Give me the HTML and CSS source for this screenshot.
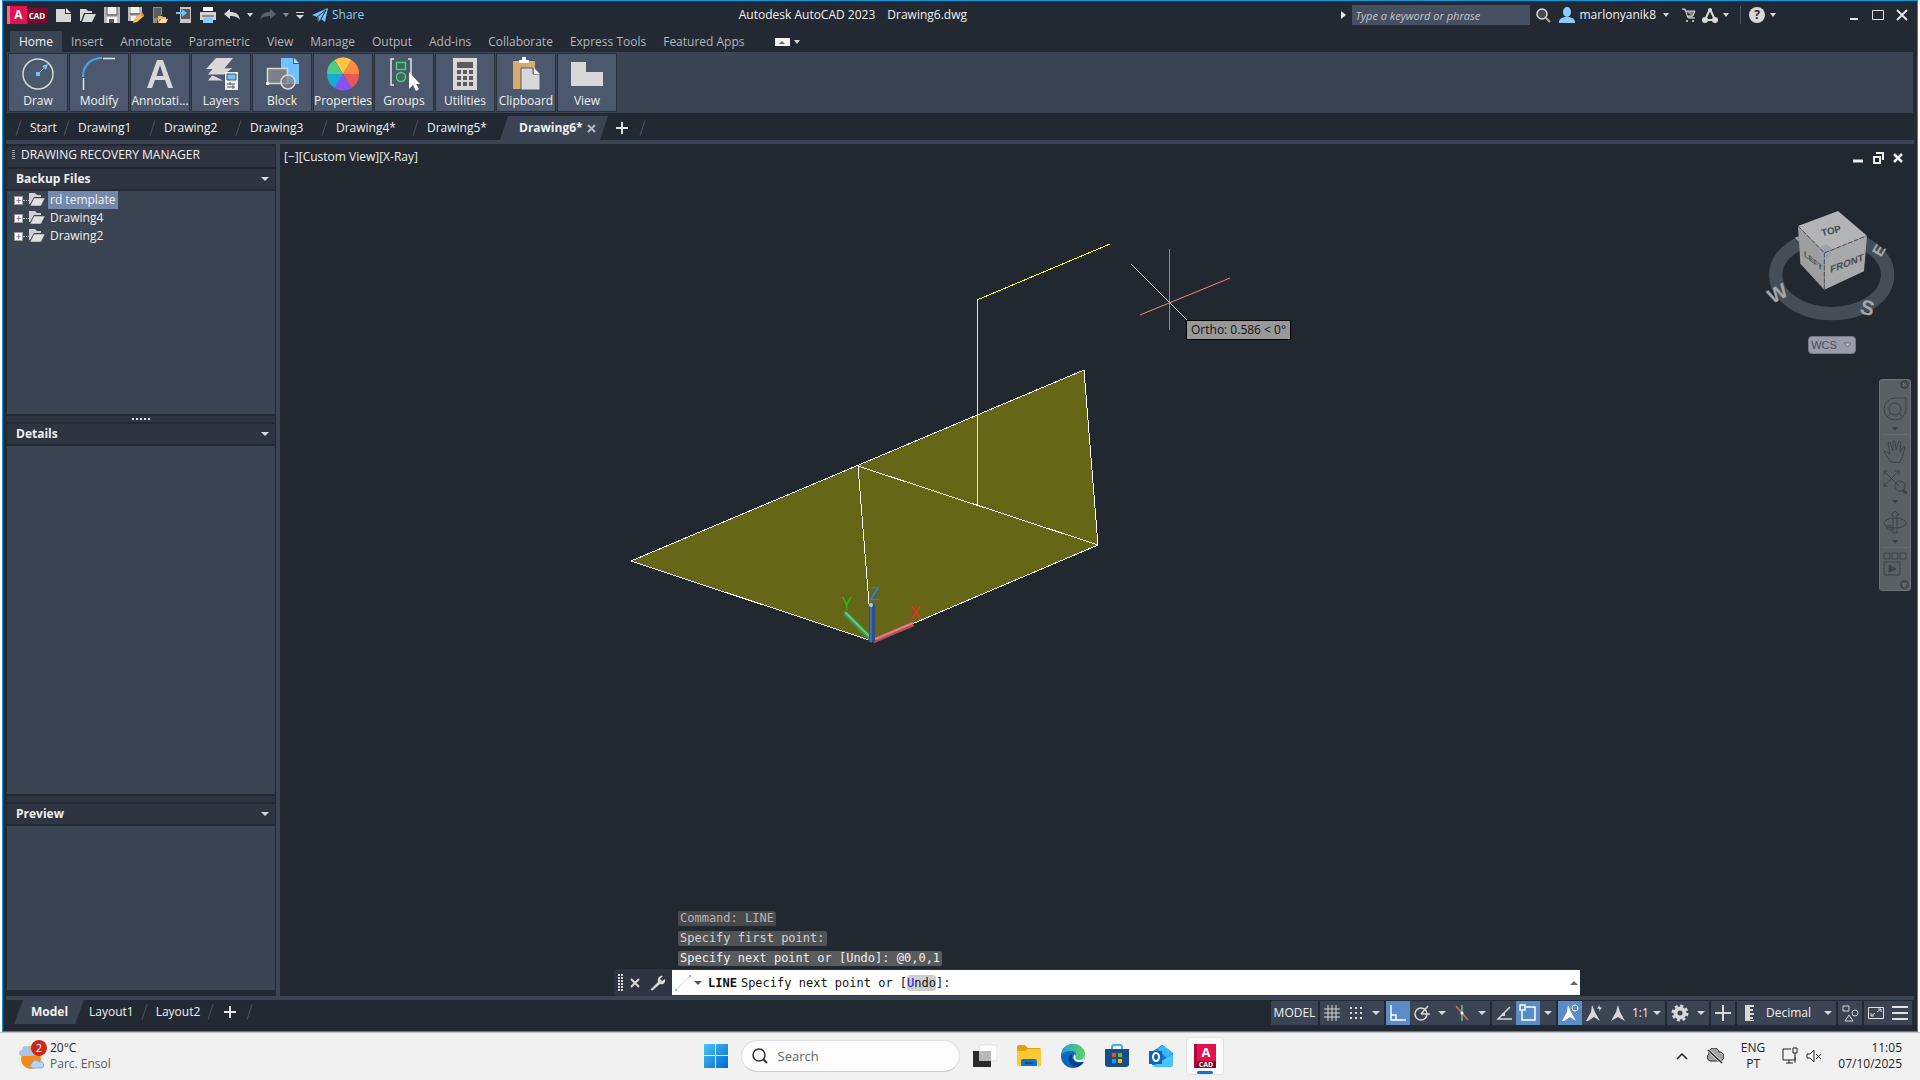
FILE: index.html
```html
<!DOCTYPE html>
<html lang="en">
<head>
    <meta charset="UTF-8">
    <meta name="viewport" content="width=device-width, initial-scale=1.0">
    <title>Autodesk AutoCAD 2023 - Drawing6.dwg</title>
    <link rel="stylesheet" href="styles.css">
</head>
<body>
<div class="window">

    <!-- Title bar -->
    <header class="titlebar">
        <button class="app-logo" aria-label="Application menu"><span class="logo-a">A</span><span class="logo-cad">CAD</span></button>
        <div class="quick">
            <button aria-label="New"><svg width="16" height="16" viewBox="0 0 16 16"><path d="M0 2h9v5h6v8H0z" fill="#d8d8d8"/><path d="M10 1l5 5h-5z" fill="#f4f4f4"/></svg></button>
            <button aria-label="Open"><svg width="16" height="16" viewBox="0 0 16 16"><path d="M0 2h6l2 2h4v2H4L1 14H0z" fill="#d8d8d8"/><path d="M5 7h11l-4 8H2z" fill="#d8d8d8"/></svg></button>
            <button aria-label="Save"><svg width="16" height="16" viewBox="0 0 16 16"><path d="M0 0h16v16H0z" fill="#b9b9b9"/><path d="M3 0h10v7H3zM3 10h10v6H3z" fill="#f4f4f4"/><path d="M3 8h10M3 0v8M13 0v8" stroke="#555" fill="none"/><path d="M5 12h5v4H5z" fill="#555"/></svg></button>
            <button aria-label="Save As"><svg width="16" height="16" viewBox="0 0 16 16"><path d="M0 0h14v8l-6 6H0z" fill="#b9b9b9"/><path d="M3 0h8v6H3zM3 9h5v5H3z" fill="#f4f4f4"/><path d="M2 7h10" stroke="#444"/><path d="M6 12l7-6 3 3-7 6-4 1z" fill="#f3c14c"/><path d="M12 7l2-2 2 3-1 2z" fill="#f07b5c"/></svg></button>
            <button aria-label="Open from Web and Mobile"><svg width="16" height="16" viewBox="0 0 16 16"><path d="M1 0h9v8H7l-2 8H1z" fill="#8d8d8d"/><path d="M2 1h7v10H2z" fill="#5b5b5b"/><path d="M6 9h4l1 1h3v2H8l-2 4z" fill="#e8b768"/><path d="M9 12h7l-2 4H6z" fill="#fbdca0"/></svg></button>
            <button aria-label="Save to Web and Mobile"><svg width="16" height="16" viewBox="0 0 16 16"><path d="M4 0h11v16H4z" fill="#c6c6c6"/><path d="M5 2h9v10H5z" fill="#5b5b5b"/><path d="M0 5h6V2l5 4-5 4V7H0z" fill="#6fc1ff"/></svg></button>
            <button aria-label="Plot"><svg width="16" height="16" viewBox="0 0 16 16"><path d="M3 0h10v4H3z" fill="#fff"/><path d="M0 5h16v8H0z" fill="#d4d4d4"/><path d="M3 10h10v6H3z" fill="#8ccbff"/><path d="M2 9h12" stroke="#444"/></svg></button>
            <button aria-label="Undo"><svg width="16" height="16" viewBox="0 0 16 16"><path d="M0 7l6-5v3c6 0 9 2 10 8-2-3-5-4-10-4v3z" fill="#d8d8d8"/></svg></button>
            <button class="drop" aria-label="Undo list"></button>
            <button aria-label="Redo"><svg width="16" height="16" viewBox="0 0 16 16"><path d="M16 7l-6-5v3C4 5 1 7 0 13c2-3 5-4 10-4v3z" fill="#5b6168"/></svg></button>
            <button class="drop dim" aria-label="Redo list"></button>
            <button class="customize" aria-label="Customize toolbar"></button>
            <a class="share" href="#"><svg width="16" height="16" viewBox="0 0 16 16"><path d="M0 8L16 1l-3 14-4-3-3 3-1-5z" fill="#6fc1ff"/><path d="M5 10l9-7-5 9M6 15v-5" stroke="#222933" fill="none"/></svg>Share</a>
        </div>
        <h1 class="title"><span>Autodesk AutoCAD 2023</span><span>Drawing6.dwg</span></h1>
        <div class="infocenter">
            <i class="arrow-right"></i>
            <input class="keyword" type="text" aria-label="Search help" placeholder="Type a keyword or phrase">
            <button class="w26" aria-label="Search"><svg width="16" height="16" viewBox="0 0 16 16"><circle cx="7" cy="7" r="5" fill="#454b52" stroke="#d8d8d8" stroke-width="1.500"/><path d="M11 11l4 4" stroke="#d2a371" stroke-width="2"/></svg></button>
            <button class="user"><svg width="16" height="16" viewBox="0 0 16 16"><ellipse cx="8" cy="5" rx="4" ry="5" fill="#8ccbff"/><path d="M0 16c0-5 3-5 6-6h4c3 1 6 1 6 6z" fill="#8ccbff"/></svg>marlonyanik8</button>
            <button class="drop user-drop" aria-label="Account menu"></button>
            <button class="w26" aria-label="App store"><svg width="16" height="16" viewBox="0 0 16 16"><path d="M1 2h3l3 9h7M5 4h9l-2 5H6" fill="#8c8c8c" stroke="#d8d8d8"/><circle cx="6" cy="14" r="1" fill="#d8d8d8"/><circle cx="12" cy="14" r="1" fill="#d8d8d8"/></svg></button>
            <button aria-label="Autodesk products"><svg width="16" height="16" viewBox="0 0 16 16"><path d="M8 2L3 13M8 2l5 11M5 13h7" stroke="#d8d8d8" stroke-width="2" fill="none"/><circle cx="8" cy="3" r="2" fill="#d8d8d8"/><circle cx="3" cy="13" r="3" fill="#d8d8d8"/><circle cx="13" cy="13" r="3" fill="#d8d8d8"/></svg></button>
            <button class="drop" aria-label="Products menu"></button>
            <i class="divider"></i>
            <button class="help" aria-label="Help"><span>?</span></button>
            <button class="drop" aria-label="Help menu"></button>
        </div>
        <div class="win-controls">
            <button aria-label="Minimize"><svg width="14" height="14" viewBox="0 0 14 14"><path d="M3 11h8" stroke="#e4e4e4" stroke-width="2"/></svg></button>
            <button aria-label="Maximize"><svg width="14" height="14" viewBox="0 0 14 14"><path d="M1.500 2.500h11v9h-11z" fill="none" stroke="#e4e4e4"/></svg></button>
            <button aria-label="Close"><svg width="14" height="14" viewBox="0 0 14 14"><path d="M2 2l10 10M12 2L2 12" stroke="#e4e4e4" stroke-width="2"/></svg></button>
        </div>
    </header>

    <!-- Ribbon -->
    <nav class="ribbon-tabs">
        <button class="active">Home</button>
        <button>Insert</button>
        <button>Annotate</button>
        <button>Parametric</button>
        <button>View</button>
        <button>Manage</button>
        <button>Output</button>
        <button>Add-ins</button>
        <button>Collaborate</button>
        <button>Express Tools</button>
        <button>Featured Apps</button>
        <button class="ribbon-min" aria-label="Minimize ribbon"></button>
        <button class="drop" aria-label="Ribbon options"></button>
    </nav>
    <div class="ribbon">
        <button><svg width="34" height="34" viewBox="0 0 34 34"><circle cx="17" cy="17" r="15" fill="none" stroke="#d8d8d8" stroke-width="1.500"/><path d="M17 17l8-8" fill="none" stroke="#6fc1ff"/><path d="M15 15h4v4h-4z" fill="#6fc1ff"/><path d="M21 9l6-2-2 6z" fill="#6fc1ff"/></svg>Draw</button>
        <button><svg width="34" height="34" viewBox="0 0 34 34"><path d="M1 20C1 8 9 1 20 1" fill="none" stroke="#4da3ee" stroke-width="2"/><path d="M1.500 21v12M21 1.500h12" stroke="#e4e4e4" stroke-width="1.500"/></svg>Modify</button>
        <button><svg width="34" height="34" viewBox="0 0 34 34"><path d="M4 31L14 3h6l10 28h-5l-3-8H12l-3 8zM13.500 19h7L17 8z" fill="#d8d8d8"/></svg>Annotati...</button>
        <button><svg width="34" height="34" viewBox="0 0 34 34"><path d="M12 1h17l-9 11H2z" fill="#d8d8d8"/><path d="M8 12l-5 6h17l9-7M8 18l-5 6h17" fill="#d8d8d8" stroke="#4b586d"/><path d="M21 15h13v18H21z" fill="#f0f0f0"/><path d="M23 17h9v6h-9z" fill="#6fc1ff" stroke="#555"/><path d="M23 27h8M23 30h8M26 25v3M29 28v4" stroke="#555"/></svg>Layers</button>
        <button><svg width="34" height="34" viewBox="0 0 34 34"><path d="M16 1h12v6h6v20H16z" fill="#6fc1ff"/><path d="M29 1l5 5h-5z" fill="#b9e0ff"/><path d="M2.500 11.500h20v15h-20z" fill="#7b8189" stroke="#d8d8d8" stroke-width="1.500"/><circle cx="23" cy="25" r="7" fill="#7b8189" fill-opacity=".7" stroke="#d8d8d8" stroke-width="1.500"/><path d="M1 25h3v3H1z" fill="#f4f4f4"/></svg>Block</button>
        <button><svg width="34" height="34" viewBox="0 0 34 34"><path d="M17 17L8.500 3a16 16 0 0 1 17 0z" fill="#ffc542"/><path d="M17 17l8.500-14A16 16 0 0 1 33 17z" fill="#ff8b3d"/><path d="M17 17h16a16 16 0 0 1-7.500 14z" fill="#e95858"/><path d="M17 17l8.500 14a16 16 0 0 1-17 0z" fill="#8851f7"/><path d="M17 17L8.500 31A16 16 0 0 1 1 17z" fill="#17abd1"/><path d="M17 17H1A16 16 0 0 1 8.500 3z" fill="#4bcb84"/></svg>Properties</button>
        <button><svg width="34" height="34" viewBox="0 0 34 34"><path d="M7 2H4v26h3M21 2h3v17" fill="none" stroke="#e4e4e4" stroke-width="1.500"/><path d="M9.500 5.500h9v7h-9z" fill="#3c6b59" stroke="#4bcb84" stroke-width="1.500"/><circle cx="14" cy="20" r="4.500" fill="#3c6b59" stroke="#4bcb84" stroke-width="1.500"/><path d="M22 15v17l4-4 3 6 3-2-3-5h4z" fill="#fff"/></svg>Groups</button>
        <button><svg width="34" height="34" viewBox="0 0 34 34"><path d="M5 1h24v32H5z" fill="#d8d8d8"/><path d="M9 5h16v6H9zM9 13h4v4H9zM15 13h4v4h-4zM21 13h4v4h-4zM9 19h4v4H9zM15 19h4v4h-4zM21 19h4v4h-4zM9 25h4v4H9zM15 25h4v4h-4zM21 25h4v4h-4z" fill="#5b5b5b"/></svg>Utilities</button>
        <button><svg width="34" height="34" viewBox="0 0 34 34"><path d="M4 4h22v28H4z" fill="#d7ab70"/><path d="M10 6V3h3V0h4v3h3v3z" fill="#fff"/><path d="M12 11h12v6h7v16H12z" fill="#d8d8d8" stroke="#4b586d"/><path d="M25 11l6 6h-6z" fill="#f4f4f4"/></svg>Clipboard</button>
        <button><svg width="34" height="34" viewBox="0 0 34 34"><path d="M1 5h15v10h17v14H1z" fill="#d8d8d8"/></svg>View</button>
    </div>

    <!-- Drawing tabs -->
    <nav class="file-tabs">
        <a class="start" href="#">Start</a>
        <a href="#">Drawing1</a>
        <a href="#">Drawing2</a>
        <a href="#">Drawing3</a>
        <a class="dirty" href="#">Drawing4*</a>
        <a class="last" href="#">Drawing5*</a>
        <div class="active-tab">
            <a href="#">Drawing6*</a>
            <button aria-label="Close Drawing6"><svg width="9" height="9" viewBox="0 0 9 9"><path d="M1 1l7 7M8 1L1 8" stroke="#b4b9c0" stroke-width="2"/></svg></button>
        </div>
        <button class="new-tab" aria-label="New drawing"><svg width="12" height="12" viewBox="0 0 12 12"><path d="M6 0v12M0 6h12" stroke="#e4e4e4" stroke-width="2"/></svg></button>
    </nav>

    <main class="workspace">
        <!-- Recovery palette -->
        <aside class="palette">
            <h2 class="palette-title"><i class="grip"></i>DRAWING RECOVERY MANAGER</h2>
            <h3>Backup Files<i class="tri"></i></h3>
            <ul class="tree backup">
                <li><button class="expand" aria-label="Expand">+</button><i class="dots"></i><svg width="16" height="14" viewBox="0 0 16 14"><path d="M0 0h6l2 2h4v2H5L1 11H0z" fill="#d0d0d0"/><path d="M5 5h11l-4 8H1z" fill="#e0e0e0" stroke="#3b4453" stroke-width=".5"/></svg><a class="selected" href="#">rd template</a></li>
                <li><button class="expand" aria-label="Expand">+</button><i class="dots"></i><svg width="16" height="14" viewBox="0 0 16 14"><path d="M0 0h6l2 2h4v2H5L1 11H0z" fill="#d0d0d0"/><path d="M5 5h11l-4 8H1z" fill="#e0e0e0" stroke="#3b4453" stroke-width=".5"/></svg><a href="#">Drawing4</a></li>
                <li><button class="expand" aria-label="Expand">+</button><i class="dots"></i><svg width="16" height="14" viewBox="0 0 16 14"><path d="M0 0h6l2 2h4v2H5L1 11H0z" fill="#d0d0d0"/><path d="M5 5h11l-4 8H1z" fill="#e0e0e0" stroke="#3b4453" stroke-width=".5"/></svg><a href="#">Drawing2</a></li>
            </ul>
            <div class="splitter"><i></i><i></i><i></i><i></i><i></i></div>
            <h3>Details<i class="tri"></i></h3>
            <div class="details"></div>
            <div class="splitter"></div>
            <h3>Preview<i class="tri"></i></h3>
            <div class="preview"></div>
        </aside>

        <!-- Drawing area -->
        <section class="canvas">
            <svg class="model" width="100%" height="100%">
                <path d="M351 417L578 322 804 226 818 401 592 497z" fill="#666617"/>
                <path d="M351 417L804 226 818 401 592 497zM578 322L818 401M578 322L592 497" class="edge"/>
                <path d="M830 100L697 156V361" class="rubber"/>

                <!-- ucs icon -->
                <path d="M593 497L565 469" stroke="#3a9450" stroke-width="5"/>
                <path d="M593 496L565 468" stroke="#5fcf74" stroke-width="2"/>
                <path d="M593 497L633 480" stroke="#b04e52" stroke-width="5"/>
                <path d="M593 496L633 479" stroke="#df8080" stroke-width="2"/>
                <path d="M592 498V460" stroke="#2f4f8a" stroke-width="6"/>
                <path d="M591 498V462" stroke="#4369ac" stroke-width="2"/>
                <circle cx="591" cy="461" r="2" fill="#9fd2ff"/>
                <g class="ucs-text">
                    <text x="562" y="466" fill="#18bc18">Y</text>
                    <text x="590" y="456" fill="#2a78f0">Z</text>
                    <text x="630" y="475" fill="#f02a2a">X</text>
                </g>

                <!-- crosshair -->
                <path d="M889 105h1v81h-1z" fill="#8080f5"/>
                <path d="M860 171l90-37" stroke="#ff8080"/>
                <path d="M851 120l56 56" stroke="#80ff80"/>
            </svg>

            <div class="view-label"><a href="#">[−]</a><a href="#">[Custom View]</a><a href="#">[X-Ray]</a></div>
            <div class="tooltip">Ortho: 0.586 &lt; 0°</div>

            <div class="mdi">
                <button aria-label="Minimize drawing"><svg width="12" height="12" viewBox="0 0 12 12"><path d="M1 9h10" stroke="#eee" stroke-width="3"/></svg></button>
                <button aria-label="Restore drawing"><svg width="12" height="12" viewBox="0 0 12 12"><path d="M4 1h7v7M2 5h6v6H2z" fill="none" stroke="#eee" stroke-width="2"/></svg></button>
                <button aria-label="Close drawing"><svg width="12" height="12" viewBox="0 0 12 12"><path d="M2 2l8 8M10 2l-8 8" stroke="#eee" stroke-width="2.500"/></svg></button>
            </div>

            <div class="viewcube">
                <svg width="137" height="117" viewBox="70 200 411 351">
                    <ellipse cx="276" cy="404" rx="168" ry="116" fill="none" stroke="#454d56" stroke-width="40"/>
                    <g class="compass">
                        <text transform="translate(98 492) rotate(-28)">W</text>
                        <text transform="translate(358 518) rotate(14)">S</text>
                        <text transform="translate(424 352) rotate(-60)" class="east">E</text>
                        <path d="M168 291l14 14M168 295l12-6" stroke="#9a9da1" stroke-width="5"/>
                    </g>
                    <path d="M175 257l120-45 87 74-128 52z" fill="#b2b4b6"/>
                    <path d="M175 257l79 81v110l-72-78z" fill="#9c9ea0"/>
                    <path d="M254 338l128-52-9 107-119 55z" fill="#a7a9ab"/>
                    <path d="M238 322l22-11 16 12v25l-22 9-18-17z" fill="#9aa2ac"/>
                    <path d="M175 257l79 81 128-52M254 338v110" fill="none" stroke="#4b4f54" stroke-width="3" stroke-dasharray="14 5"/>
                    <g class="faces">
                        <text transform="translate(248 288) rotate(-14)">TOP</text>
                        <text transform="translate(272 398) skewY(-21)">FRONT</text>
                        <text transform="translate(193 346) skewY(40)" class="left">LEFT</text>
                    </g>
                </svg>
                <button class="wcs">WCS<svg width="9" height="6" viewBox="0 0 9 6"><path d="M1 1h7L4.500 5z" fill="#c0c2cc" stroke="#6d6f7b"/></svg></button>
            </div>

            <div class="navbar">
                <button class="nav-dot" aria-label="Close navigation bar"><svg width="9" height="9" viewBox="0 0 9 9"><circle cx="4.500" cy="4.500" r="4" fill="#464b50"/><path d="M3 3l3 3M6 3L3 6" stroke="#7b8085"/></svg></button>
                <button aria-label="Steering wheel"><svg width="24" height="24" viewBox="0 0 24 24"><path d="M12 1h11v11a11 11 0 1 1-11-11z"/><circle cx="12" cy="12" r="6"/><path d="M8 16l-4 4M16 16l4 4"/></svg></button>
                <i class="nav-tri"></i><hr>
                <button aria-label="Pan"><svg width="24" height="24" viewBox="0 0 24 24"><path d="M8 23l-7-10 1-1 5 3L5 4l2-1 3 9V2h2l1 9 3-9 2 1-1 10 4-6 1 1-3 11-3 5z"/></svg></button>
                <button aria-label="Zoom extents"><svg width="24" height="24" viewBox="0 0 24 24"><path d="M1 1l15 15M16 1L1 16M1 5V1h4M12 1h4v4M1 12v4h4"/><circle cx="17" cy="16" r="5"/><path d="M20 20l4 4" stroke-width="3"/></svg></button>
                <i class="nav-tri"></i>
                <button aria-label="Orbit"><svg width="24" height="24" viewBox="0 0 24 24"><ellipse cx="12" cy="13" rx="11" ry="5"/><path d="M10 23V5H8l4-4 4 4h-2v18zM8 15l-5 2 5 4z"/></svg></button>
                <i class="nav-tri"></i><hr>
                <button aria-label="ShowMotion"><svg width="24" height="24" viewBox="0 0 24 24"><path d="M1 1h6v6H1zM9 1h6v6H9zM17 1h6v6h-6zM1 10h16v13H1z"/><path d="M6 13l7 4-7 3z" fill="#42474d"/></svg></button>
                <button class="nav-dot end" aria-label="Navigation bar options"><svg width="9" height="9" viewBox="0 0 9 9"><circle cx="4.500" cy="4.500" r="4" fill="#464b50"/><path d="M2 4h5M3 6h3" stroke="#7b8085"/></svg></button>
            </div>

            <div class="command">
                <div class="history">
                    <span class="old">Command: LINE</span>
                    <span class="mid">Specify first point:</span>
                    <span>Specify next point or [Undo]: @0,0,1</span>
                </div>
                <div class="command-line">
                    <i class="grip big"></i>
                    <button aria-label="Close command line"><svg width="12" height="12" viewBox="0 0 12 12"><path d="M2 2l8 8M10 2l-8 8" stroke="#d8d8d8" stroke-width="2"/></svg></button>
                    <button class="wrench" aria-label="Customize"><svg width="16" height="16" viewBox="0 0 16 16"><path d="M1 14L8 7c-1-4 2-7 5-6l-3 3 2 2 3-2c1 4-2 6-5 5l-7 6c-1 1-3 0-2-1z" fill="#d8d8d8"/></svg></button>
                    <div class="prompt">
                        <svg width="18" height="18" viewBox="0 0 18 18"><path d="M3 15L15 3" stroke="#d4d4d4"/><path d="M1 15h2v2H1zM15 1h2v2h-2z" fill="#6fc1ff"/></svg>
                        <i class="tri dark"></i>
                        <label for="cmd"><b>LINE</b>Specify next point or [<button class="option"><u>U</u>ndo</button>]:</label>
                        <input id="cmd" type="text">
                        <i class="tri up"></i>
                    </div>
                </div>
            </div>
        </section>
    </main>

    <!-- Layout tabs and status bar -->
    <footer class="bottom">
        <nav class="layout-tabs">
            <a class="active" href="#">Model</a>
            <a href="#">Layout1</a>
            <a href="#">Layout2</a>
            <button aria-label="New layout"><svg width="12" height="12" viewBox="0 0 12 12"><path d="M6 0v12M0 6h12" stroke="#e4e4e4" stroke-width="2"/></svg></button>
        </nav>
        <div class="status">
            <div class="group"><button class="model-btn">MODEL</button></div>
            <div class="group">
                <button aria-label="Grid"><svg width="18" height="18" viewBox="0 0 18 18"><path d="M5 1v16M9 1v16M13 1v16M1 5h16M1 9h16M1 13h16" stroke="#d8d8d8"/></svg></button>
                <button aria-label="Snap"><svg width="18" height="18" viewBox="0 0 18 18"><path d="M3 4h14M3 9h14M3 14h14" stroke="#d8d8d8" stroke-width="2" stroke-dasharray="2 3"/></svg></button>
                <button class="drop" aria-label="Snap options"></button>
            </div>
            <div class="group">
                <button class="on" aria-label="Ortho"><svg width="18" height="18" viewBox="0 0 18 18"><path d="M2 1v15h15M2 11h5v5" fill="none" stroke="#fff" stroke-width="1.500"/></svg></button>
                <button aria-label="Polar tracking"><svg width="18" height="18" viewBox="0 0 18 18"><circle cx="8" cy="10" r="6" fill="none" stroke="#d8d8d8" stroke-width="1.500"/><path d="M8 10h9M8 10l7-8" stroke="#d8d8d8" stroke-width="1.500"/></svg></button>
                <button class="drop" aria-label="Polar options"></button>
                <button aria-label="Isometric drafting"><svg width="18" height="18" viewBox="0 0 18 18"><path d="M3 2l12 14" stroke="#e4655f" stroke-width="1.500"/><path d="M9 1v16" stroke="#4bcb84" stroke-width="1.500"/><circle cx="9" cy="9" r="1.500" fill="#fff"/></svg></button>
                <button class="drop" aria-label="Isoplane options"></button>
            </div>
            <div class="group">
                <button aria-label="Object snap tracking"><svg width="18" height="18" viewBox="0 0 18 18"><path d="M15 3L3 15h14" fill="none" stroke="#d8d8d8" stroke-width="1.500"/><path d="M7 9h3v3H7z" fill="#d8d8d8"/></svg></button>
                <button class="on" aria-label="Object snap"><svg width="18" height="18" viewBox="0 0 18 18"><path d="M7 3h9v13H3V7M1 1h5v5H1z" fill="none" stroke="#fff" stroke-width="1.500"/></svg></button>
                <button class="drop" aria-label="Object snap options"></button>
            </div>
            <div class="group">
                <button class="on" aria-label="Annotation visibility"><svg width="18" height="18" viewBox="0 0 18 18"><path d="M7 1l3 7 5 9-6-4-6 4-2 0 5-9z" fill="#fff"/><circle cx="14" cy="4" r="3" fill="#5b8cc6" stroke="#fff"/></svg></button>
                <button aria-label="Auto scale"><svg width="18" height="18" viewBox="0 0 18 18"><path d="M7 1l3 7 5 9-6-4-6 4-2 0 5-9z" fill="#d8d8d8"/><path d="M15 0l-4 5h3l-1 4 5-6h-3z" fill="#d8d8d8" stroke="#3b4453"/></svg></button>
                <button aria-label="Annotation scale icon"><svg width="18" height="18" viewBox="0 0 18 18"><path d="M9 1l2 7 5 9-7-4-7 4 5-9z" fill="#d8d8d8"/></svg></button>
                <select class="scale" aria-label="Annotation scale"><option>1:1</option></select>
                <i class="tri"></i>
            </div>
            <div class="group">
                <button class="w26" aria-label="Workspace"><svg width="18" height="18" viewBox="0 0 18 18"><circle cx="9" cy="9" r="4.500" fill="none" stroke="#d8d8d8" stroke-width="4"/><circle cx="9" cy="9" r="7" fill="none" stroke="#d8d8d8" stroke-width="3" stroke-dasharray="3 2.500"/></svg></button>
                <button class="drop" aria-label="Workspace options"></button>
            </div>
            <div class="group"><button aria-label="Annotation monitor"><svg width="18" height="18" viewBox="0 0 18 18"><path d="M9 1v16M1 9h16" stroke="#d8d8d8" stroke-width="2"/></svg></button></div>
            <div class="group">
                <svg class="ruler" width="10" height="18" viewBox="0 0 10 18"><path d="M0 1h9v2H5v2h3v2H5v2h4v2H5v2h3v2H5v1h4v1H0z" fill="#d8d8d8"/></svg>
                <select class="units" aria-label="Units"><option>Decimal</option></select>
                <i class="tri"></i>
            </div>
            <div class="group"><button aria-label="Quick properties"><svg width="18" height="18" viewBox="0 0 18 18"><path d="M2 2h6v5H2zM8 11l4 6H4z" fill="none" stroke="#d8d8d8"/><circle cx="14" cy="9" r="3" fill="none" stroke="#d8d8d8"/></svg></button></div>
            <div class="group">
                <button aria-label="Clean screen"><svg width="18" height="18" viewBox="0 0 18 18"><path d="M1.500 3.500h15v11h-15z" fill="none" stroke="#e4e4e4"/><path d="M10 8l4-3M4 12l4-3M11 5h3v3M4 9v3h3" stroke="#d8d8d8" fill="none"/></svg></button>
                <button aria-label="Customization"><svg width="18" height="18" viewBox="0 0 18 18"><path d="M1 3h16M1 9h16M1 15h16" stroke="#e4e4e4" stroke-width="2"/></svg></button>
            </div>
        </div>
    </footer>
</div>

<!-- Windows taskbar -->
<div class="taskbar">
    <a class="weather" href="#">
        <span class="weather-icon">
            <svg width="26" height="28" viewBox="0 0 26 28"><circle cx="12" cy="17" r="10" fill="#f28a1c"/><path d="M2 14a10 10 0 0 1 20 0z" fill="#f8a92a"/><path d="M3 14a3 3 0 0 1 0-6 4 4 0 0 1 8 0 3 3 0 0 1 1 6z" fill="#a9c5ee"/><path d="M13 26a3 3 0 0 1 0-5 4 4 0 0 1 7-1 3 3 0 0 1 3 6z" fill="#bdd3f4" stroke="#88a9e0"/></svg>
            <b class="badge">2</b>
        </span>
        <span>20°C<small>Parc. Ensol</small></span>
    </a>
    <div class="apps">
        <button aria-label="Start"><svg width="24" height="24" viewBox="0 0 24 24"><defs><linearGradient id="win" x1="0" y1="0" x2="1" y2="1"><stop offset="0" stop-color="#4cc4f4"/><stop offset="1" stop-color="#0068d0"/></linearGradient></defs><path d="M0 0h11v11H0zM12 0h12v11H12zM0 12h11v12H0zM12 12h12v12H12z" fill="url(#win)"/></svg></button>
        <div class="search">
            <svg width="16" height="16" viewBox="0 0 16 16"><circle cx="7" cy="7" r="6" fill="none" stroke="#333" stroke-width="1.500"/><path d="M11 11l4 4" stroke="#333" stroke-width="2"/></svg>
            <input type="search" aria-label="Search" placeholder="Search">
        </div>
        <button aria-label="Task view"><svg width="24" height="24" viewBox="0 0 24 24"><path d="M6 1h18v16H6z" fill="#fff" stroke="#ddd"/><path d="M0 7h18v16H0z" fill="#2b2b2b"/><path d="M6 7h12v10H6z" fill="#b8b8b8"/></svg></button>
        <button aria-label="File Explorer"><svg width="24" height="24" viewBox="0 0 24 24"><path d="M0 3a2 2 0 0 1 2-2h6l3 3h11a2 2 0 0 1 2 2v6H0z" fill="#e0a30e"/><path d="M0 7h8l3-2h13v17H0z" fill="#fcc934"/><path d="M4 22v-5a2 2 0 0 1 2-2h12a2 2 0 0 1 2 2v5z" fill="#1373c9"/><path d="M8 19h8" stroke="#084f94" stroke-width="2"/></svg></button>
        <button aria-label="Edge"><svg width="24" height="24" viewBox="0 0 24 24"><defs><linearGradient id="edge" x1="0" y1="0" x2="1" y2="0"><stop offset="0" stop-color="#229fe0"/><stop offset="1" stop-color="#60d65d"/></linearGradient></defs><circle cx="12" cy="12" r="12" fill="#0b69bd"/><path d="M0 12C0 4 6 0 12 0c7 0 12 5 12 10 0 4-3 6-6 6-4 0-5-2-3-4 1-4-3-5-5-5-5 0-9 2-10 5z" fill="url(#edge)"/><path d="M9 11c-3 4-1 10 5 12 4 0 7-2 9-5-6 2-13 0-12-7z" fill="#0a3f86"/><path d="M14 10c-3 2-2 7 3 8h6l1-7c-1 3-3 5-6 5-4 0-4-3-3-4z" fill="#f2f2f2"/></svg></button>
        <button aria-label="Microsoft Store"><svg width="24" height="24" viewBox="0 0 24 24"><path d="M7 6V3a2 2 0 0 1 2-2h6a2 2 0 0 1 2 2v3" fill="none" stroke="#35b6f0" stroke-width="2"/><path d="M0 5h24v15a3 3 0 0 1-3 3H3a3 3 0 0 1-3-3z" fill="#164f85"/><path d="M7 9h4v4H7z" fill="#f25022"/><path d="M13 9h4v4h-4z" fill="#7fba00"/><path d="M7 15h4v4H7z" fill="#00a4ef"/><path d="M13 15h4v4h-4z" fill="#ffb900"/></svg></button>
        <button aria-label="Outlook"><svg width="24" height="24" viewBox="0 0 24 24"><path d="M3 8l10-7 11 8v12H3z" fill="#1476d4"/><path d="M8 5l6-4 10 8-6 5z" fill="#38b9f3"/><path d="M3 23l21-13v11a2 2 0 0 1-2 2z" fill="#45c5f8"/><path d="M0 7h13v13H0z" fill="#0f63bd"/><ellipse cx="7" cy="13" rx="3" ry="4" fill="none" stroke="#fff" stroke-width="2"/></svg></button>
        <button class="running" aria-label="AutoCAD"><span class="acad"><b>A</b><small>CAD</small></span></button>
    </div>
    <div class="tray">
        <button aria-label="Hidden icons"><svg width="12" height="8" viewBox="0 0 12 8"><path d="M1 7l5-5 5 5" fill="none" stroke="#222" stroke-width="1.500"/></svg></button>
        <button class="cloud" aria-label="OneDrive"><svg width="18" height="16" viewBox="0 0 18 16"><path d="M4 13a4 4 0 0 1-1-7 5 5 0 0 1 10-2 4 4 0 0 1 1 9z" fill="#a4a4a4" stroke="#222"/><path d="M2 2l14 13" stroke="#f1f1f1" stroke-width="3"/><path d="M2 2l14 13" stroke="#222" stroke-width="1.500"/></svg></button>
        <button class="lang">ENG<br>PT</button>
        <button class="net" aria-label="Network and volume"><svg width="18" height="18" viewBox="0 0 18 18"><path d="M10 2H2v11h12v-3M5 16h7M8 13v3M12 1h4v5h-4zM14 6v10" fill="none" stroke="#222"/></svg><svg width="18" height="18" viewBox="0 0 18 18"><path d="M2 7h3l4-4v12l-4-4H2zM11 7l5 5M16 7l-5 5" fill="none" stroke="#222"/></svg></button>
        <button class="clock">11:05<br>07/10/2025</button>
    </div>
</div>
</body>
</html>
```
FILE: styles.css
```css
* {
    box-sizing: border-box;
}
body {
    margin: 0;
    height: 100vh;
    display: flex;
    flex-direction: column;
    overflow: hidden;
    background: #fff;
    color: #f0f0f0;
    font-family: "Open Sans", "Noto Sans", sans-serif;
    font-size: 12px;
    line-height: 16px;
}
button, input, select {
    font: inherit;
    color: inherit;
    background: none;
    border: 0;
    padding: 0;
    margin: 0;
}
button {
    display: flex;
    align-items: center;
    justify-content: center;
    white-space: nowrap;
}
a {
    color: inherit;
    text-decoration: none;
    white-space: nowrap;
}
h1, h2, h3, ul {
    margin: 0;
    padding: 0;
    font-size: 12px;
    font-weight: normal;
    list-style: none;
}
svg {
    display: block;
    flex-shrink: 0;
}
.window {
    flex: 1;
    min-height: 0;
    margin: 0 2px;
    display: flex;
    flex-direction: column;
    background: #222933;
    border: 1px solid #0a95dc;
}

/* small arrows */
.drop {
    width: 16px;
}
.drop::before, .tri, .nav-tri {
    content: "";
    border: 3px solid transparent;
    border-top: 4px solid #d8d8d8;
    border-bottom: 0;
}
.drop.dim::before {
    border-top-color: #8a8f95;
}
.tri {
    border-width: 4px 4px 0;
}
.tri.dark {
    border-top-color: #555;
}
.tri.up {
    border-top: 0;
    border-bottom: 4px solid #666;
}
.w26 {
    width: 26px;
}

/* title bar */
.titlebar {
    height: 30px;
    display: flex;
    align-items: center;
    padding: 0 0 2px 4px;
}
.app-logo {
    height: 18px;
    border-left: 3px solid #f46b8f;
    font-weight: bold;
    color: #fff;
}
.logo-a {
    width: 17px;
    background: #e51050;
    line-height: 18px;
}
.logo-cad {
    width: 20px;
    background: #7c0a2e;
    font-size: 8px;
    line-height: 15px;
}
.quick {
    display: flex;
    align-items: center;
    margin-left: 5px;
}
.quick button {
    width: 24px;
    height: 24px;
}
.quick .drop {
    width: 12px;
}
.quick .customize {
    width: 16px;
    flex-direction: column;
    gap: 2px;
}
.customize::before {
    content: "";
    width: 8px;
    height: 1px;
    background: #d8d8d8;
}
.customize::after {
    content: "";
    border: 4px solid transparent;
    border-top-color: #d8d8d8;
    border-bottom: 0;
}
.share {
    display: flex;
    align-items: center;
    gap: 4px;
    margin-left: 4px;
    color: #8ccbff;
}
.title {
    flex: 1;
    display: flex;
    justify-content: center;
    gap: 12px;
    white-space: nowrap;
}
.infocenter {
    display: flex;
    align-items: center;
}
.arrow-right {
    border: 4px solid transparent;
    border-left: 5px solid #e4e4e4;
    border-right: 0;
    margin-right: 6px;
}
.keyword {
    width: 178px;
    height: 20px;
    padding: 0 3px;
    background: #465062;
}
.keyword::placeholder {
    color: #c0c4ca;
    font-style: italic;
    font-size: 11px;
    opacity: 1;
}
.user {
    gap: 4px;
    padding-left: 3px;
}
.user-drop {
    width: 20px;
}
.divider {
    width: 1px;
    height: 18px;
    margin: 0 8px 0 6px;
    background: #4b5260;
}
.help span {
    width: 16px;
    height: 16px;
    border-radius: 8px;
    background: #d8d8d8;
    color: #222933;
    font-weight: bold;
}
.win-controls {
    display: flex;
    gap: 10px;
    margin-left: 66px;
    padding-right: 8px;
}

/* ribbon */
.ribbon-tabs {
    height: 21px;
    display: flex;
    align-items: stretch;
    padding-left: 7px;
    color: #b4b8bd;
}
.ribbon-tabs button {
    padding: 0 8px 0 9px;
}
.ribbon-tabs .active {
    padding-right: 9px;
    background: #3b4453;
    color: #f4f4f4;
}
.ribbon-tabs .ribbon-min {
    width: 15px;
    height: 8px;
    margin: 7px 0 0 22px;
    padding: 0;
    background: #f0f0f0;
}
.ribbon-min::before {
    content: "";
    border: 3px solid transparent;
    border-bottom: 3px solid #666;
    border-top: 0;
}
.ribbon-tabs .drop {
    width: 14px;
    padding: 0;
}
.ribbon {
    height: 61px;
    margin: 0 4px;
    padding: 1px;
    display: flex;
    gap: 1px;
    background: #3b4453;
}
.ribbon button {
    width: 60px;
    flex-direction: column;
    justify-content: space-between;
    padding: 3px 0 2px;
    overflow: hidden;
    background: #4b586d;
    border: 1px solid #29303b;
}

/* drawing tabs */
.file-tabs {
    height: 27px;
    display: flex;
    align-items: center;
    padding: 2px 0 0 15px;
}
.file-tabs > a {
    position: relative;
    width: 86px;
    padding-left: 12px;
    line-height: 24px;
}
.file-tabs > a.start {
    width: 48px;
}
.file-tabs > a.dirty {
    width: 91px;
}
.file-tabs > a.last {
    width: 85px;
}
.file-tabs > a::before, .new-tab::after, .layout-tabs a + a::after, .layout-tabs button::after {
    content: "";
    width: 1px;
    height: 16px;
    background: #4b5260;
    transform: rotate(18deg);
}
.file-tabs > a::before {
    position: absolute;
    left: 0;
    top: 4px;
}
.active-tab {
    width: 108px;
    height: 24px;
    margin-top: 1px;
    display: flex;
    align-items: center;
    gap: 4px;
    padding-left: 19px;
    background: #3b4453;
    clip-path: polygon(8px 0, 100% 0, calc(100% - 8px) 100%, 0 100%);
    font-weight: bold;
}
.new-tab {
    gap: 14px;
    margin-left: 8px;
}

/* workspace */
.workspace {
    flex: 1;
    min-height: 0;
    display: flex;
    margin: 0 3px;
    border-top: 4px solid #3b4453;
    border-bottom: 4px solid #3b4453;
}
.palette {
    width: 274px;
    flex-shrink: 0;
    display: flex;
    flex-direction: column;
    gap: 2px;
    padding: 2px 1px 6px 1px;
    background: #222933;
    border-right: 4px solid #3b4453;
}
.palette h2, .palette h3 {
    display: flex;
    align-items: center;
    height: 20px;
    background: #2e3440;
}
.palette h2.palette-title {
    gap: 6px;
    height: 21px;
    padding: 0 0 3px 5px;
    border-radius: 4px 4px 0 0;
}
.palette h3 {
    justify-content: space-between;
    padding: 0 6px 0 9px;
    font-weight: bold;
}
.grip {
    width: 3px;
    height: 10px;
    background: repeating-linear-gradient(#9da2aa 0 1px, transparent 1px 2px);
}
.tree, .details, .preview {
    min-height: 0;
    background: #3b4453;
}
.backup {
    flex: 223;
}
.details {
    flex: 347;
}
.preview {
    flex: 164;
}
.tree li {
    display: flex;
    align-items: center;
    height: 18px;
    padding-left: 7px;
}
.expand {
    width: 9px;
    height: 9px;
    background: #fff;
    border: 1px solid #9a9a9a;
    color: #2b4a9a;
    font-size: 10px;
    line-height: 9px;
}
.dots {
    width: 6px;
    border-top: 1px dotted #b4b9c0;
}
.tree a {
    margin-left: 3px;
    padding: 0 2px;
    line-height: 18px;
}
.tree .selected {
    background: #7488ab;
}
.splitter {
    height: 6px;
    display: flex;
    align-items: center;
    justify-content: center;
    gap: 2px;
    background: #2e3440;
}
.splitter i {
    width: 2px;
    height: 2px;
    background: #e4e4e4;
}

/* drawing area, things float over the model */
.canvas {
    flex: 1;
    position: relative;
    overflow: hidden;
    background: #212830;
}
.model {
    position: absolute;
}
.model .edge, .model .rubber {
    fill: none;
    stroke: #fff;
    stroke-width: 1;
    shape-rendering: crispEdges;
}
.model .rubber {
    stroke: #ffff00;
}
.ucs-text {
    font-family: "Open Sans", sans-serif;
    font-size: 18px;
}
.view-label {
    position: absolute;
    left: 4px;
    top: 5px;
}
.tooltip {
    position: absolute;
    left: 906px;
    top: 176px;
    padding: 1px 4px;
    background: #999;
    border: 1px solid #000;
    color: #111;
}
.mdi {
    position: absolute;
    top: 8px;
    right: 10px;
    display: flex;
    gap: 8px;
}
.viewcube {
    position: absolute;
    top: 63px;
    right: 14px;
    display: flex;
    flex-direction: column;
    align-items: center;
    gap: 12px;
}
.compass {
    fill: #a4a6a9;
    font-family: "Liberation Sans", sans-serif;
    font-weight: bold;
    font-size: 62px;
}
.compass .east {
    font-size: 48px;
}
.faces {
    fill: #45494e;
    font-family: "Liberation Sans", sans-serif;
    font-weight: bold;
    font-size: 29px;
}
.faces .left {
    font-size: 22px;
}
.wcs {
    width: 48px;
    height: 18px;
    gap: 6px;
    background: #9b9cab;
    border: 1px solid #777987;
    border-radius: 4px;
    color: #4c4e58;
    font-family: "Liberation Sans", sans-serif;
    font-size: 11px;
}
.navbar {
    position: absolute;
    top: 235px;
    right: 3px;
    width: 32px;
    height: 212px;
    display: flex;
    flex-direction: column;
    align-items: center;
    background: #5b6065;
    border: 1px solid #6d7277;
    border-radius: 3px;
}
.navbar svg {
    fill: none;
    stroke: #3d4249;
}
.navbar button {
    height: 32px;
}
.navbar .nav-dot {
    height: 10px;
    align-self: flex-end;
    margin: 0 1px 4px 0;
}
.navbar .end {
    margin-top: auto;
    margin-bottom: 1px;
}
.navbar .nav-tri {
    border-top-color: #3b4046;
    margin: 2px 0 3px;
}
.navbar hr {
    width: 26px;
    margin: 0;
    border: 0;
    border-top: 1px solid #666b70;
}

/* command line */
.command {
    position: absolute;
    left: 334px;
    right: 334px;
    bottom: 0;
    font-family: "DejaVu Sans Mono", "Liberation Mono", monospace;
}
.history {
    display: flex;
    flex-direction: column;
    align-items: flex-start;
    gap: 5px;
    padding: 0 0 3px 64px;
    line-height: 15px;
}
.history span {
    padding: 0 2px;
    background: #595b5d;
    border-radius: 2px;
}
.history .mid {
    color: #d4d4d4;
    background: #505254;
}
.history .old {
    color: #b4b4b4;
    background: #48494b;
}
.command-line {
    height: 27px;
    display: flex;
    align-items: center;
    padding: 1px 0 1px 4px;
    background: #2e3440;
    border-radius: 3px;
}
.grip.big {
    width: 5px;
    height: 18px;
    margin-right: 6px;
    background: repeating-linear-gradient(90deg, transparent 0 2px, #2e3440 2px 3px), repeating-linear-gradient(#d8d8d8 0 2px, transparent 2px 3px);
}
.wrench {
    margin: 0 6px 0 9px;
}
.prompt {
    flex: 1;
    align-self: stretch;
    display: flex;
    align-items: center;
    padding: 0 2px;
    background: #fff;
    color: #111;
    white-space: nowrap;
}
.prompt .dark {
    margin: 0 6px 0 2px;
}
.prompt b {
    margin-right: 4px;
}
.prompt input {
    flex: 1;
    min-width: 0;
    outline: 0;
}
.option {
    display: inline;
    background: #cecece;
    border-radius: 3px;
}
.option u {
    color: #1d13e0;
    text-decoration: none;
}

/* layout tabs and status bar */
.bottom {
    height: 31px;
    display: flex;
    justify-content: space-between;
}
.layout-tabs {
    display: flex;
    padding-left: 11px;
    height: 24px;
    line-height: 24px;
}
.layout-tabs a {
    display: flex;
    align-items: center;
    gap: 10px;
}
.layout-tabs .active {
    width: 70px;
    padding-left: 17px;
    background: #3b4453;
    clip-path: polygon(9px 0, 100% 0, calc(100% - 9px) 100%, 0 100%);
    font-weight: bold;
}
.layout-tabs button {
    margin-left: 13px;
    gap: 13px;
}
.layout-tabs a + a {
    padding-left: 5px;
}
.layout-tabs a + a + a {
    padding-left: 11px;
}
.status {
    display: flex;
    gap: 2px;
    padding: 1px 5px 6px 0;
}
.group {
    display: flex;
    align-items: center;
    background: #3b4453;
}
.group button {
    height: 24px;
    min-width: 24px;
}
.group .drop {
    width: 16px;
    min-width: 16px;
}
.group .drop::before {
    border-width: 4px 4px 0;
}
.group .on {
    background: #5b8cc6;
}
.group .model-btn {
    width: 47px;
}
.group select {
    appearance: none;
}
.group .tri {
    margin: 0 4px;
}
.scale {
    width: 19px;
    padding-left: 2px;
}
.ruler {
    margin: 0 11px 0 8px;
}
.units {
    width: 54px;
}

/* taskbar */
.taskbar {
    height: 48px;
    display: grid;
    grid-template-columns: 1fr auto 1fr;
    align-items: center;
    padding-bottom: 1px;
    background: #f1f1f1;
    border-top: 1px solid #c0c3c6;
    color: #222;
}
.weather {
    display: flex;
    gap: 4px;
    align-items: center;
    padding-left: 19px;
}
.weather small, .acad small {
    display: block;
    font-size: 12px;
    color: #5b5b5b;
}
.weather-icon {
    position: relative;
    margin-right: 1px;
}
.badge {
    position: absolute;
    top: -2px;
    right: -2px;
    width: 16px;
    height: 16px;
    border-radius: 8px;
    background: #c42b1c;
    color: #fff;
    font-weight: normal;
    font-size: 11px;
    text-align: center;
}
.apps {
    display: flex;
    align-items: center;
    gap: 6px;
}
.apps button {
    width: 38px;
    height: 38px;
    border-radius: 4px;
}
.search {
    display: flex;
    align-items: center;
    gap: 10px;
    width: 219px;
    height: 32px;
    padding-left: 10px;
    background: #fcfcfc;
    border: 1px solid #dedede;
    border-bottom-color: #ccc;
    border-radius: 16px;
}
.search input {
    flex: 1;
    min-width: 0;
    font-size: 13px;
    outline: 0;
}
.search input::placeholder {
    color: #666;
    opacity: 1;
}
.apps .running {
    position: relative;
    background: #fbfbfb;
    border: 1px solid #e2e2e2;
}
.running::after {
    content: "";
    position: absolute;
    bottom: 0;
    width: 16px;
    height: 3px;
    border-radius: 2px;
    background: #0078d4;
}
.acad {
    display: flex;
    flex-direction: column;
    width: 22px;
    height: 24px;
    background: #e51050;
    border-left: 3px solid #b00a3c;
    color: #fff;
}
.acad b {
    line-height: 17px;
    font-size: 13px;
}
.acad small {
    background: #7c0a2e;
    color: #fff;
    font-size: 7px;
    font-weight: bold;
    line-height: 7px;
}
.tray {
    display: flex;
    align-items: center;
    justify-content: flex-end;
    padding-right: 18px;
}
.cloud {
    margin: 0 17px 0 18px;
}
.net {
    gap: 6px;
    margin: 0 15px 0 16px;
}
.clock {
    text-align: right;
}
```
